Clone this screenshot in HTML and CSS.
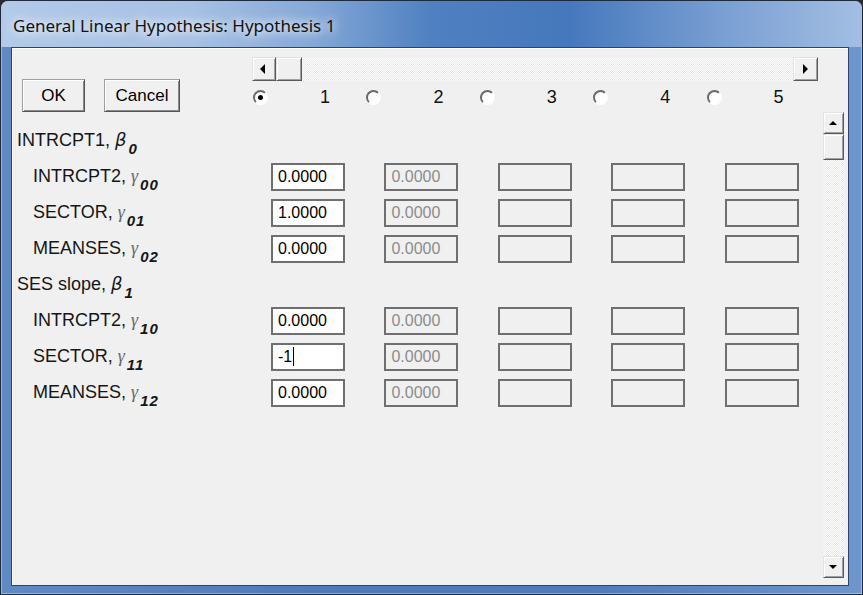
FILE: index.html
```html
<!DOCTYPE html>
<html lang="en">

<head>
  <meta charset="UTF-8">
  <title>General Linear Hypothesis</title>
  <link rel="stylesheet" href="styles.css">
</head>

<body>
  <div class="window">
    <div class="titlebar">General Linear Hypothesis: Hypothesis 1</div>
    <div class="client">
      <div class="pane">
        <div class="buttons">
          <button class="btn">OK</button>
          <button class="btn wide">Cancel</button>
        </div>

        <!-- horizontal scroller over the hypothesis columns -->
        <div class="hscroll">
          <span class="sb-btn"><span class="arr-left"></span></span>
          <span class="sb-btn thumb"></span>
          <span class="sb-track"></span>
          <span class="sb-btn right"><span class="arr-right"></span></span>
        </div>

        <div class="opt"><span class="radio on"></span><span class="num">1</span></div>
        <div class="opt"><span class="radio"></span><span class="num">2</span></div>
        <div class="opt"><span class="radio"></span><span class="num">3</span></div>
        <div class="opt"><span class="radio"></span><span class="num">4</span></div>
        <div class="opt"><span class="radio"></span><span class="num">5</span></div>

        <div class="lbl head">INTRCPT1, <i class="beta">β</i><sub>0</sub></div>

        <div class="lbl sub">INTRCPT2, <i class="gam">γ</i><sub>00</sub></div>
        <span class="cell live">0.0000</span>
        <span class="cell">0.0000</span>
        <span class="cell"></span>
        <span class="cell"></span>
        <span class="cell"></span>

        <div class="lbl sub">SECTOR, <i class="gam">γ</i><sub>01</sub></div>
        <span class="cell live">1.0000</span>
        <span class="cell">0.0000</span>
        <span class="cell"></span>
        <span class="cell"></span>
        <span class="cell"></span>

        <div class="lbl sub">MEANSES, <i class="gam">γ</i><sub>02</sub></div>
        <span class="cell live">0.0000</span>
        <span class="cell">0.0000</span>
        <span class="cell"></span>
        <span class="cell"></span>
        <span class="cell"></span>

        <div class="lbl head">SES slope, <i class="beta">β</i><sub>1</sub></div>

        <div class="lbl sub">INTRCPT2, <i class="gam">γ</i><sub>10</sub></div>
        <span class="cell live">0.0000</span>
        <span class="cell">0.0000</span>
        <span class="cell"></span>
        <span class="cell"></span>
        <span class="cell"></span>

        <div class="lbl sub">SECTOR, <i class="gam">γ</i><sub>11</sub></div>
        <span class="cell live">-1<span class="caret"></span></span>
        <span class="cell">0.0000</span>
        <span class="cell"></span>
        <span class="cell"></span>
        <span class="cell"></span>

        <div class="lbl sub">MEANSES, <i class="gam">γ</i><sub>12</sub></div>
        <span class="cell live">0.0000</span>
        <span class="cell">0.0000</span>
        <span class="cell"></span>
        <span class="cell"></span>
        <span class="cell"></span>
      </div>

      <div class="vscroll">
        <span class="sb-btn vs"><span class="arr-up"></span></span>
        <span class="sb-btn vs thumb"></span>
        <span class="sb-track"></span>
        <span class="sb-btn vs"><span class="arr-down"></span></span>
      </div>
    </div>
  </div>
</body>

</html>
```

FILE: styles.css
```css
* {
  padding: 0;
  margin: 0;
  box-sizing: border-box;
}

body {
  width: 863px;
  height: 595px;
  overflow: hidden;
  background: #2b2b2b;
}

.window {
  width: 863px;
  height: 595px;
  display: flex;
  flex-direction: column;
  border: solid 1px #1e2b3c;
  border-radius: 8px 8px 0 0;
  background: linear-gradient(90deg, #5f8ac4, #4b79b9 40%, #4f7dbc 70%, #6f96cd);
  box-shadow: inset 0 0 0 1px rgba(255, 255, 255, 0.35);
  overflow: hidden;
}

.titlebar {
  height: 46px;
  flex: none;
  display: flex;
  align-items: center;
  padding: 2px 0 0 12px;
  font: 17px "Noto Sans", sans-serif;
  color: #111;
  background: linear-gradient(90deg, #b3cae8 0%, #a7c1e4 22%, #86a9d7 36%, #4f80c1 50%, #4578bc 66%, #7a9fd3 84%, #a3bee2 100%);
  text-shadow: 0 0 8px #fff, 0 0 14px #fff;
}

.client {
  flex: 1;
  display: flex;
  margin: 0 13px 8px 10px;
  border: solid 1px #2d4466;
  background: #f0f0f0;
  box-shadow: inset 1px 1px 0 #fff;
}

.pane {
  flex: none;
  display: grid;
  grid-template-columns: 240px repeat(5, 113.4px);
  grid-template-rows: 24px 41px;
  grid-auto-rows: 36px;
  align-content: start;
  padding-top: 9px;
}

/* push buttons */
.buttons {
  grid-column: 1;
  grid-row: 1 / span 2;
  align-self: end;
  display: flex;
  gap: 19px;
  padding-left: 10px;
  margin-bottom: 10px;
}

.btn {
  width: 63px;
  height: 33px;
  font: 17px "Liberation Sans", sans-serif;
  color: #000;
  background: #f0f0f0;
  border: solid 1px;
  border-color: #a0a0a0 #555 #555 #a0a0a0;
  box-shadow: inset 1px 1px #fff, inset -1px -1px #8a8a8a;
}

.btn.wide {
  width: 76px;
}

/* scroll bars */
.hscroll {
  grid-column: 2 / -1;
  grid-row: 1;
  width: 566px;
  display: flex;
  background: repeating-conic-gradient(#fdfdfd 0 25%, #e9e9e9 0 50%) 0 0 / 2px 2px;
}

.vscroll {
  flex: none;
  width: 21px;
  margin: 64px 4px 7px 4px;
  display: flex;
  flex-direction: column;
  background: repeating-conic-gradient(#fdfdfd 0 25%, #e9e9e9 0 50%) 0 0 / 2px 2px;
}

.sb-btn {
  flex: none;
  width: 24px;
  height: 24px;
  display: flex;
  align-items: center;
  justify-content: center;
  background: #f0f0f0;
  border: solid 1px;
  border-color: #e3e3e3 #5a5a5a #5a5a5a #e3e3e3;
  box-shadow: inset 1px 1px #fff, inset -1px -1px #a0a0a0;
}

.sb-btn.thumb {
  width: 26px;
}

.sb-btn.right {
  width: 25px;
}

.sb-btn.vs {
  width: 21px;
  height: 22px;
}

.sb-btn.vs.thumb {
  height: 26px;
}

.sb-track {
  flex: 1;
}

.arr-left,
.arr-right,
.arr-up,
.arr-down {
  width: 0;
  height: 0;
  border-style: solid;
}

.arr-left {
  border-width: 5px 5px 5px 0;
  border-color: transparent #000 transparent transparent;
  margin-right: 3px;
}

.arr-right {
  border-width: 5px 0 5px 5px;
  border-color: transparent transparent transparent #000;
}

.arr-up {
  border-width: 0 4px 4px 4px;
  border-color: transparent transparent #000 transparent;
}

.arr-down {
  border-width: 4px 4px 0 4px;
  border-color: #000 transparent transparent transparent;
}

/* hypothesis selector */
.opt {
  align-self: start;
  display: flex;
  align-items: center;
  padding: 6px 0 0 1px;
}

.radio {
  width: 15px;
  height: 15px;
  border-radius: 50%;
  border: solid 2px;
  border-color: #6a6a6a #fff #fff #6a6a6a;
  background: #fff;
  display: flex;
  align-items: center;
  justify-content: center;
}

.radio.on::after {
  content: "";
  width: 5px;
  height: 5px;
  border-radius: 50%;
  background: #000;
}

.num {
  width: 30px;
  margin-left: 42px;
  text-align: center;
  font: 18px "Liberation Sans", sans-serif;
  color: #111;
}

/* row labels */
.lbl {
  font: 18px/36px "Liberation Sans", sans-serif;
  color: #161616;
  white-space: nowrap;
}

.head {
  grid-column: 1 / -1;
  padding-left: 5px;
}

.sub {
  grid-column: 1;
  padding-left: 21px;
}

.beta {
  font: italic 18px "DejaVu Sans", sans-serif;
}

.gam {
  font: italic 18px "Liberation Serif", serif;
  color: #666;
}

.lbl sub {
  font: bold italic 15px/1 "Liberation Sans", sans-serif;
  letter-spacing: 1px;
  vertical-align: -8px;
  margin-left: 2px;
}

/* coefficient fields */
.cell {
  align-self: start;
  width: 74px;
  height: 28px;
  margin: 5px 0 0 19px;
  padding-left: 5px;
  border: solid 2px #6f6f6f;
  background: #f0f0f0;
  font: 16px/24px "Liberation Sans", sans-serif;
  color: #8c8c8c;
}

.cell.live {
  background: #fff;
  color: #000;
}

.caret {
  display: inline-block;
  width: 1px;
  height: 19px;
  margin-left: 1px;
  background: #000;
  vertical-align: -4px;
}
```
